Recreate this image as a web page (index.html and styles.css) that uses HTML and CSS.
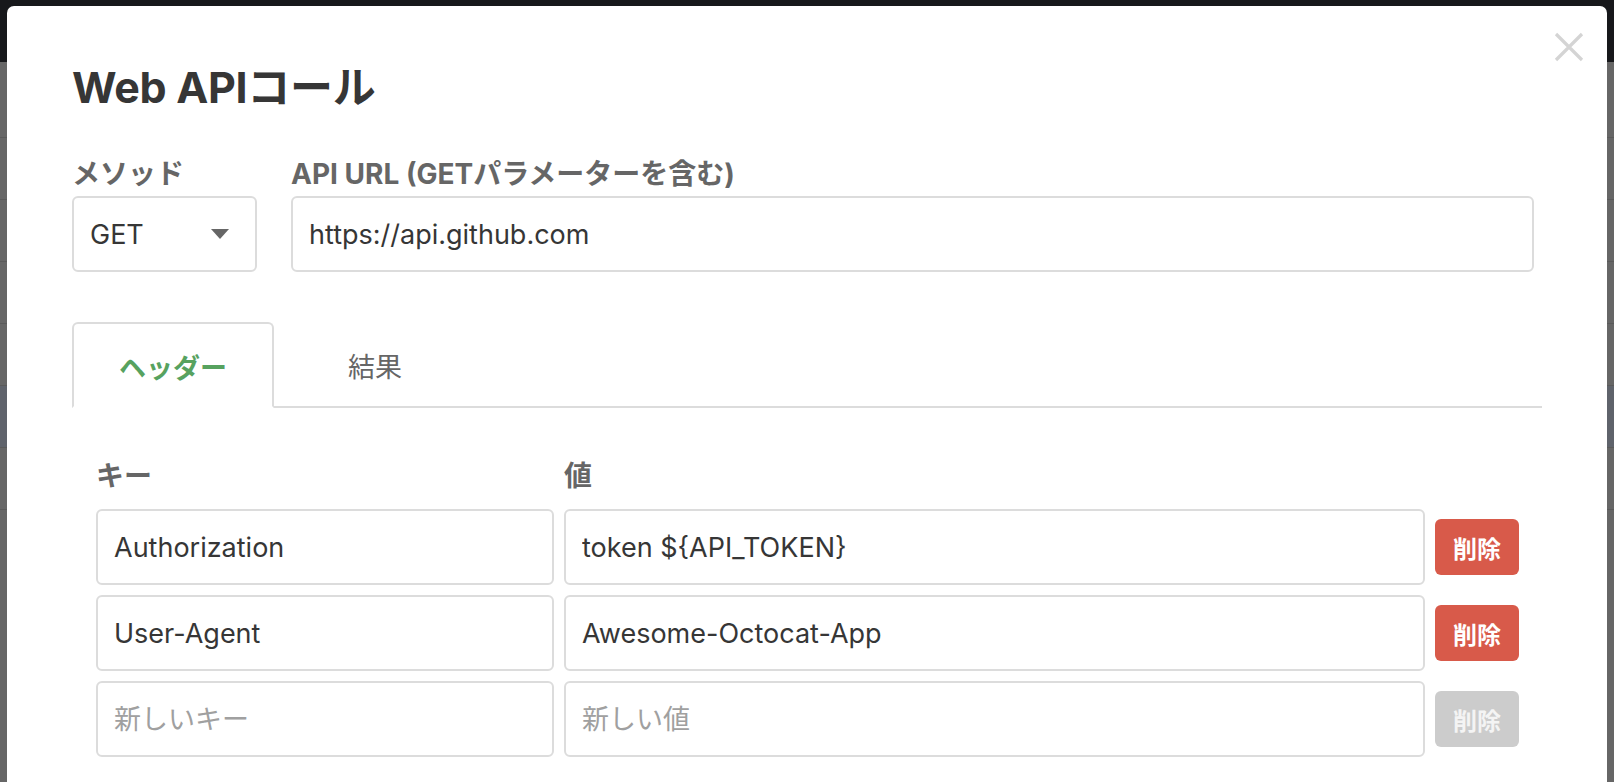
FILE: index.html
```html
<!DOCTYPE html>
<html lang="ja">
<head>
<meta charset="utf-8">
<title>Web APIコール</title>
<link rel="stylesheet" href="styles.css">
</head>
<body>
<div class="page">
  <div class="page-top"></div>
  <div class="page-body">
    <div class="page-row"></div>
    <div class="page-row"></div>
    <div class="page-row"></div>
    <div class="page-row"></div>
    <div class="page-row"></div>
    <div class="page-row page-row-sel"></div>
    <div class="page-row"></div>
  </div>
</div>

<div class="modal">
  <button class="close" aria-label="閉じる">
    <svg width="30" height="30" viewBox="0 0 30 30"><path d="M2 2 L28 28 M28 2 L2 28" stroke="#d4d4d4" stroke-width="3.2" fill="none"/></svg>
  </button>

  <h1 class="title">Web APIコール</h1>

  <div class="form-row">
    <div class="field field-method">
      <div class="label">メソッド</div>
      <div class="select">
        <span>GET</span>
        <svg class="caret" width="18" height="10" viewBox="0 0 18 10"><path d="M0 0 H18 L9 10 Z" fill="#666"/></svg>
      </div>
    </div>
    <div class="field field-url">
      <div class="label">API URL (GETパラメーターを含む)</div>
      <input class="input" type="text" value="https://api.github.com">
    </div>
  </div>

  <div class="tabs">
    <div class="tab tab-active">ヘッダー</div>
    <div class="tab">結果</div>
    <div class="tab-fill"></div>
  </div>

  <div class="headers">
    <div class="hlabel">キー</div>
    <div class="hlabel">値</div>
    <div></div>

    <input class="input" type="text" value="Authorization">
    <input class="input" type="text" value="token ${API_TOKEN}">
    <button class="btn btn-danger">削除</button>

    <input class="input" type="text" value="User-Agent">
    <input class="input" type="text" value="Awesome-Octocat-App">
    <button class="btn btn-danger">削除</button>

    <input class="input" type="text" placeholder="新しいキー">
    <input class="input" type="text" placeholder="新しい値">
    <button class="btn btn-disabled" disabled>削除</button>
  </div>
</div>
</body>
</html>
```

FILE: styles.css
```css
* { box-sizing: border-box; }

html, body {
  margin: 0;
  padding: 0;
  width: 1614px;
  height: 782px;
  overflow: hidden;
  font-family: Inter, "Noto Sans CJK JP", sans-serif;
  color: #363636;
}

.page {
  width: 1614px;
  height: 782px;
  background: #646464;
  display: flex;
  flex-direction: column;
}

.page-top {
  height: 62px;
  background: #17181b;
}

.page-body {
  flex: 1;
  background: #666666;
  display: flex;
  flex-direction: column;
  padding-top: 14px;
}

.page-row {
  height: 62px;
  border-bottom: 1px solid #5a5a5a;
}

.page-row-sel { background: #5f636b; }

.modal {
  position: absolute;
  top: 6px;
  left: 7px;
  width: 1600px;
  height: 800px;
  background: #fff;
  border-radius: 7px 7px 0 0;
  padding: 55px 65px 0 65px;
}

.close {
  position: absolute;
  top: 26px;
  right: 23px;
  width: 30px;
  height: 30px;
  padding: 0;
  border: 0;
  background: transparent;
}

.close svg { display: block; }

.title {
  margin: 0;
  font-size: 43px;
  line-height: 52px;
  font-weight: 700;
  color: #363636;
  letter-spacing: -0.3px;
}

.form-row {
  display: flex;
  gap: 34px;
  margin-top: 45px;
  margin-right: 8px;
}

.field { display: flex; flex-direction: column; gap: 6px; }
.field-method { width: 185px; flex: none; }
.field-url { flex: 1; }

.label {
  font-size: 28px;
  line-height: 32px;
  font-weight: 700;
  color: #666;
}

.select, .input {
  height: 76px;
  border: 2px solid #dcdcdc;
  border-radius: 6px;
  background: #fff;
  font-family: Inter, "Noto Sans CJK JP", sans-serif;
  font-size: 27px;
  color: #363636;
}

.select {
  display: flex;
  align-items: center;
  justify-content: space-between;
  padding: 0 26px 0 16px;
}

.input {
  width: 100%;
  padding: 0 16px;
  outline: none;
}

.input::placeholder { color: #a0a0a0; }

.tabs {
  display: flex;
  margin-top: 50px;
  height: 86px;
}

.tab {
  width: 202px;
  display: flex;
  align-items: center;
  justify-content: center;
  font-size: 27px;
  color: #666;
  border-bottom: 2px solid #dcdcdc;
  padding-top: 2px;
}

.tab-active {
  color: #57a25f;
  font-weight: 700;
  border: 2px solid #dcdcdc;
  border-bottom-color: transparent;
  border-radius: 6px 6px 0 0;
}

.tab-fill {
  flex: 1;
  border-bottom: 2px solid #dcdcdc;
}

.headers {
  display: grid;
  grid-template-columns: 458px 1fr 84px;
  column-gap: 10px;
  row-gap: 10px;
  align-items: center;
  padding: 0 23px 0 24px;
  margin-top: 52px;
}

.hlabel {
  font-size: 28px;
  line-height: 32px;
  font-weight: 700;
  color: #666;
  margin-bottom: 7px;
}

.btn {
  height: 56px;
  border: 0;
  border-radius: 6px;
  font-family: Inter, "Noto Sans CJK JP", sans-serif;
  font-size: 24px;
  font-weight: 700;
  color: #fff;
  padding: 0;
}

.btn-danger { background: #d85a4a; }
.btn-disabled { background: #cccccc; color: #f4f4f4; }
```
